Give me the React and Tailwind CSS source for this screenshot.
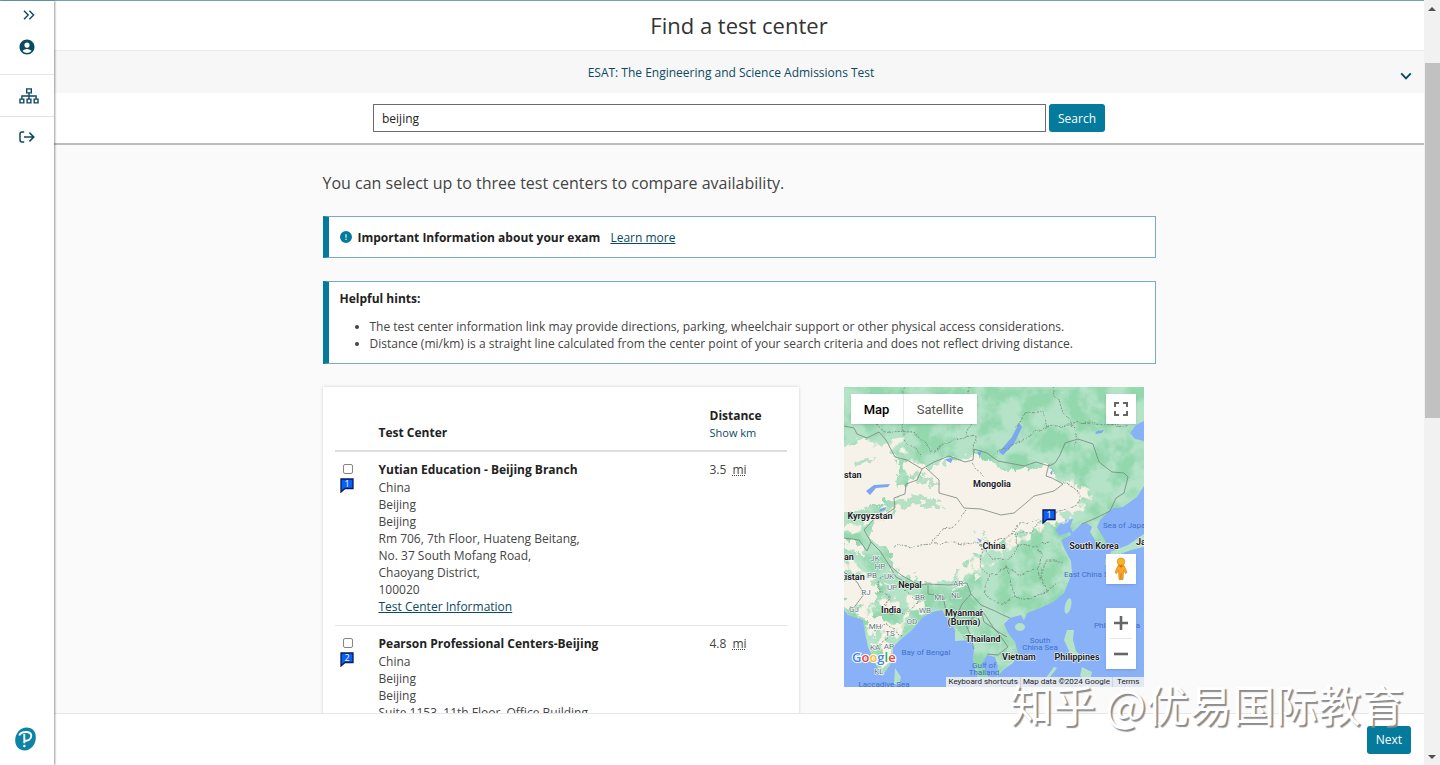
import { FaCircleExclamation } from 'react-icons/fa6'
import { MdAccountCircle } from 'react-icons/md'

const centers = [
  {
    id: 1,
    name: 'Yutian Education - Beijing Branch',
    lines: ['China', 'Beijing', 'Beijing', 'Rm 706, 7th Floor, Huateng Beitang,', 'No. 37 South Mofang Road,', 'Chaoyang District,', '100020'],
    distance: '3.5',
  },
  {
    id: 2,
    name: 'Pearson Professional Centers-Beijing',
    lines: ['China', 'Beijing', 'Beijing', 'Suite 1153, 11th Floor, Office Building'],
    distance: '4.8',
  },
]

const countries = [
  ['stan', 0, 91, 'start'],
  ['Mongolia', 148, 100],
  ['Kyrgyzstan', 26, 132],
  ['China', 150, 162],
  ['South Korea', 250, 162],
  ['Ja', 292, 158, 'start'],
  ['an', 0, 173, 'start'],
  ['kistan', -4, 193, 'start'],
  ['Nepal', 66, 201],
  ['India', 47, 226],
  ['Myanmar', 120, 229],
  ['(Burma)', 120, 238],
  ['Thailand', 139, 255],
  ['Vietnam', 175, 273],
  ['Philippines', 233, 273],
]

const seas = [
  ['Sea of Japa', 259, 141, 'start'],
  ['East China S', 220, 190, 'start'],
  ['Phil', 250, 241, 'start'],
  ['a', 294, 241],
  ['South', 196, 256],
  ['China Sea', 196, 263],
  ['Bay of Bengal', 82, 268],
  ['Gulf of', 140, 281],
  ['Thailand', 140, 288],
  ['Laccadive Sea', 40, 300],
]

const states = [
  ['JK', 31, 174],
  ['HP', 36, 182],
  ['PB', 28, 191],
  ['UK', 45, 192],
  ['UP', 48, 203],
  ['RJ', 22, 208],
  ['AR', 114, 199],
  ['BR', 76, 213],
  ['ML', 96, 213],
  ['NL', 112, 211],
  ['GJ', 10, 225],
  ['WB', 81, 226],
  ['OD', 68, 237],
  ['MH', 31, 242],
  ['TS', 46, 249],
  ['KA', 31, 263],
  ['AP', 45, 262],
  ['KL', 35, 287],
]

function Sidebar() {
  return (
    <nav className="relative z-20 flex w-[54px] shrink-0 flex-col bg-white text-[#0b4a63] shadow-[1px_0_2px_rgba(0,0,0,0.4)]">
      <div className="flex h-[74px] flex-col items-center border-b border-[#e4e4e4]">
        <button aria-label="Expand menu" className="mt-2 ml-1 flex h-3 items-center">
          <svg width="12" height="10" viewBox="0 0 12 10" fill="none" stroke="currentColor" strokeWidth="1.4">
            <path d="M1 .7 5.2 5 1 9.3M6.4 .7 10.6 5 6.4 9.3" />
          </svg>
        </button>
        <button aria-label="My account" className="mt-[17px]">
          <MdAccountCircle className="size-[18px]" />
        </button>
      </div>
      <button aria-label="Programs" className="flex h-[42px] items-center justify-center border-b border-[#e4e4e4] pl-1">
        <svg width="20" height="16" viewBox="0 0 20 16" fill="none" stroke="currentColor" strokeWidth="1.4">
          <path d="M7.7 .9h4.6v4H7.7zM1 11.1h3.8v3.8H1zM8.1 11.1h3.8v3.8H8.1zM15.2 11.1H19v3.8h-3.8zM10 5v6M2.9 11V8h14.2v3" />
        </svg>
      </button>
      <button aria-label="Sign out" className="flex h-10 items-center justify-center">
        <svg width="16" height="12" viewBox="0 0 16 12" fill="none" stroke="currentColor" strokeWidth="1.5">
          <path d="M5.2 .9H3Q1 .9 1 2.9v6.2q0 2 2 2h2.2M5 6h9.6M10.4 1.6 14.8 6l-4.4 4.4" />
        </svg>
      </button>
      <svg className="mt-auto mb-[14px] ml-[14px]" width="23" height="24" viewBox="0 0 23 24" aria-label="Pearson">
        <path d="M12.5 .6c6 0 9.600 4 9.300 10.400-.3 7-5.100 12.400-11.100 12.400C5 23.400 1 19 1.200 13 1.500 6 6.500 .6 12.500 .6Z" fill="#0b84a5" />
        <path d="M5.200 8.500C7 4.200 17.300 3.300 17.300 8.800c0 3.700-3.600 5.300-6 4.800M10.300 7v9.300" fill="none" stroke="#fff" strokeWidth="1.900" />
        <circle cx="10.400" cy="19" r="1.200" fill="#fff" />
      </svg>
    </nav>
  )
}

function Flag({ number }) {
  return (
    <svg width="14" height="15" viewBox="0 0 14 15" aria-hidden="true">
      <path d="M1 1h12v9.500H5L1 14z" fill="#0860fa" stroke="#0a1a55" strokeWidth="1.300" />
      <text x="7" y="9" textAnchor="middle" fill="#fff" className="font-['Open_Sans',sans-serif] text-[9px]">{number}</text>
    </svg>
  )
}

function MapLabels({ labels, className }) {
  return (
    <g className={className}>
      {labels.map(([text, x, y, anchor]) => (
        <text key={text + y} x={x} y={y} textAnchor={anchor || 'middle'}>{text}</text>
      ))}
    </g>
  )
}

function MapDrawing() {
  return (
    <svg viewBox="0 0 300 300" className="block w-full" role="img" aria-label="Map of test centers">
      <defs>
        <filter id="relief" x="0" y="0" width="100%" height="100%" colorInterpolationFilters="sRGB">
          <feTurbulence type="fractalNoise" baseFrequency="0.045" numOctaves="5" seed="7" />
          <feColorMatrix values="0 0 0 0 0.45  0 0 0 0 0.8  0 0 0 0 0.58  0 4 0 0 -1.6" />
          <feComposite in2="SourceGraphic" operator="in" />
        </filter>
        <filter id="sand" x="0" y="0" width="100%" height="100%" colorInterpolationFilters="sRGB">
          <feTurbulence type="fractalNoise" baseFrequency="0.08" numOctaves="4" seed="12" />
          <feColorMatrix values="0 0 0 0 0.97  0 0 0 0 0.945  0 0 0 0 0.9  0 9 0 0 -4.4" />
          <feComposite in2="SourceGraphic" operator="in" />
        </filter>
        <filter id="ragged" x="-5%" y="-5%" width="110%" height="110%" colorInterpolationFilters="sRGB">
          <feTurbulence type="fractalNoise" baseFrequency="0.12" numOctaves="4" seed="3" />
          <feDisplacementMap in="SourceGraphic" scale="16" xChannelSelector="R" yChannelSelector="G" />
        </filter>
        <filter id="wavy" x="-5%" y="-5%" width="110%" height="110%" colorInterpolationFilters="sRGB">
          <feTurbulence type="fractalNoise" baseFrequency="0.08" numOctaves="2" seed="5" />
          <feDisplacementMap in="SourceGraphic" scale="8" xChannelSelector="R" yChannelSelector="G" />
        </filter>
        <path id="mainland" d="M0 0H300V34L292 38 286 46 291 52 300 54V99L293 110 279 120 269 121 263 126 256 133 253 140 257 147 262 155 260 161 253 161 251 153 246 145 248 140 243 136 237 137 229 145 226 140 229 132 220 133 211 143 215 149 226 145 227 148 217 153 221 163 227 174 228 186 224 196 220 206 209 215 196 221 183 226 180 234 177 228 166 231 160 237 164 246 171 255 174 266 169 276 159 283 153 290 154 279 151 270 143 268 138 276 143 287 149 300H137L132 285 129 273 130 262 126 253 111 254 111 243 104 233 98 223 88 225 79 230 68 243 56 253 49 260 49 273 44 281 38 289 31 276 24 260 21 246 19 233 13 231 4 228 0 223Z" />
      </defs>
      <rect width="300" height="300" fill="#89b1f8" />
      <g fill="#b5e3c8">
        <use href="#mainland" />
        <path d="M51 281 57 290 55 298 50 297Z" />
        <ellipse cx="176" cy="240" rx="5" ry="4" />
        <ellipse cx="224" cy="219" rx="3" ry="8" transform="rotate(14 224 219)" />
        <path d="M223 243 230 243 229 253 232 264 240 272 237 275 226 266 220 253ZM238 280 248 285 246 294 236 289ZM213 281 203 294 201 292 210 280ZM262 168 268 166 267 175 261 178ZM266 165 284 158 300 147V160L287 163 271 169Z" />
      </g>
      <use href="#mainland" fill="#b5e3c8" filter="url(#relief)" opacity=".5" />
      <path d="M108 205 124 200 130 220 124 250 112 244 106 228Z" fill="#86cfa4" opacity=".6" filter="url(#ragged)" />
      {/* scattered dry patches: India, the far west, the northern plain */}
      <g fill="#000" filter="url(#sand)">
        <path d="M0 165 30 190 60 205 80 214 82 225 66 240 48 256 46 275 38 282 28 262 22 240 12 228 0 220ZM0 60 60 50 90 90 130 70 130 130 60 130 0 150ZM100 165 160 145 225 90 250 105 245 125 215 140 170 160 130 195 108 204Z" />
      </g>
      {/* dry regions */}
      <g fill="#f7f2e9" filter="url(#ragged)">
        <path d="M-8 63 22 54 43 61 52 72 56 87 52 108 40 116 20 122 -8 126Z" />
        <path d="M86 84 105 72 135 68 160 84 180 82 205 77 214 95 232 99 240 108 230 122 210 127 192 139 176 147 160 153 146 160 136 166 124 172 116 184 106 196 84 195 62 189 47 180 48 165 28 152 28 140 52 126 57 100 66 92Z" />
        <path d="M-6 197 20 190 34 201 30 215 10 220 -6 207ZM-6 150 14 158 22 168 10 166ZM22 230 36 226 40 240 30 250Z" />
      </g>
      {/* greener mountains inside the dry regions */}
      <g fill="#a9dcbd" filter="url(#ragged)" opacity=".8">
        <path d="M-6 127 37 119 53 112 76 108 98 119 96 122 76 117 57 120 30 127 -6 140ZM64 88 78 87 95 98 79 98ZM134 145 148 155 140 152ZM9 74 30 70 26 76 14 79Z" />
      </g>
      <g fill="#7ba7ee">
        <path d="M175 36 178 40 170 57 159 68 155 65 168 50ZM22 104 30 98 46 97 44 100 32 101 26 108ZM36 122 42 120 41 123 35 125ZM101 72 109 71 107 76 103 74ZM133 66 138 63 136 69ZM253 44 260 43 258 46 251 47ZM133 151 138 153 136 156ZM206 86 209 82 208 88Z" />
      </g>
      <g fill="none" stroke="#75877d" strokeWidth=".8">
        <path d="M0 39 10 41 13 47 23 51 35 45 42 53 51 70 63 73 78 82 90 75 105 69 121 75 129 73 130 62 143 66 154 74 170 77 180 79 192 75 205 79 211 76 216 68 221 56 234 52 249 57 255 75 268 85 280 86 284 90 280 106 272 111 266 124 252 131 238 137" />
        <path d="M82 81 95 93 95 106 113 111 120 121 137 122 157 128 170 126 182 116 190 109 210 104 219 97 208 91 202 89 205 77" />
        <path d="M78 82 73 93 62 97 61 107 50 111 51 121 42 127 30 132 20 143 27 155 23 164 15 153 0 151M27 155 36 164 45 178 57 188 75 198 84 197 105 198 123 196 127 207 137 218 151 224 159 228 166 231" />
        <path d="M45 178 52 190 73 201M0 185 13 195 20 207 9 222M84 198 84 207 99 209 102 224M127 207 118 217 113 228M130 262 126 247 122 238 137 222 143 231 151 243 163 250M137 222 140 235 152 243 164 260 154 268 143 267" />
      </g>
      <g fill="none" stroke="#708378" strokeWidth=".8" strokeDasharray="2 1.300" filter="url(#wavy)">
        <path d="M60 0 59 50 79 69M10 23 40 44 70 45 87 65M87 65 112 52 130 48 129 65M125 0 130 30 122 49M210 0 217 25 232 41M154 66 187 48 204 40 199 24 180 27 172 42M204 40 225 37 250 36 285 39M232 46 233 60M220 95 238 107 232 116 211 126" />
        <path d="M49 160 74 158 90 157 92 150 98 142 109 141 122 124M92 157 109 155 138 158 149 173 165 172 174 158 170 146 188 146 195 135 211 125M138 158 136 177 145 189 164 181 174 188 193 183 199 170 190 159 205 154M145 189 140 208 157 218 169 209 186 212 202 203 215 194M164 181 169 209M193 183 202 203M174 158 190 159M220 174 202 174 196 192M39 188 33 203 47 211 39 225 60 229M60 229 74 214 61 203M31 243 43 238 58 249M31 262 45 252M75 210 84 219M128 75 140 90M150 155 165 150 172 138 196 132" />
      </g>
      <MapLabels labels={seas} className="fill-[#3f70c9] font-[Roboto,sans-serif] text-[8px]" />
      <MapLabels labels={states} className="fill-[#62727a] stroke-white font-[Roboto,sans-serif] text-[8px] [paint-order:stroke]" />
      <MapLabels labels={countries} className="fill-[#202124] stroke-white stroke-1 font-[Roboto,sans-serif] text-[9px] font-bold [paint-order:stroke]" />
      <text x="8" y="275" stroke="#fff" strokeWidth="2" className="font-['Open_Sans',sans-serif] text-[13px] font-semibold [paint-order:stroke]">
        <tspan fill="#4285f4">G</tspan>
        <tspan fill="#ea4335">o</tspan>
        <tspan fill="#fbbc04">o</tspan>
        <tspan fill="#4285f4">g</tspan>
        <tspan fill="#34a853">l</tspan>
        <tspan fill="#ea4335">e</tspan>
      </text>
    </svg>
  )
}

function TestCenterMap() {
  return (
    <div className="relative mr-3 w-[300px] shrink-0 self-start overflow-hidden font-[Roboto,sans-serif]">
      <MapDrawing />
      <div className="absolute top-[7px] left-[7px] flex h-[30px] bg-white text-[13px] shadow-sm">
        <button className="w-[53px] border-r border-[#e6e6e6] font-medium text-black">Map</button>
        <button className="w-[73px] text-[#565656]">Satellite</button>
      </div>
      <button aria-label="Toggle fullscreen view" className="absolute top-[7px] right-2 flex size-[30px] items-center justify-center bg-white shadow-sm">
        <svg width="14" height="14" viewBox="0 0 14 14" fill="none" stroke="#666" strokeWidth="2">
          <path d="M1 5V1h4M9 1h4v4M13 9v4H9M5 13H1V9" />
        </svg>
      </button>
      <div className="absolute top-[122px] left-[198px]">
        <Flag number={1} />
      </div>
      <button aria-label="Street View" className="absolute top-[167px] right-2 flex size-[30px] items-center justify-center bg-white shadow-sm">
        <svg width="14" height="24" viewBox="0 0 14 24">
          <path d="M4 8.500h6l3 7-1.500 1-2-3L9 22.500H5L4.500 13.500l-2 3-1.500-1z" fill="#f9a825" stroke="#d98212" strokeWidth=".7" />
          <path d="m4.500 8.500 2.500 2 2.500-2z" fill="#e65100" />
          <path d="M7 16v6" stroke="#c66e0a" strokeWidth=".7" />
          <circle cx="7" cy="4.700" r="3.700" fill="#fbb424" stroke="#d98212" strokeWidth=".7" />
        </svg>
      </button>
      <div className="absolute top-[221px] right-2 flex w-[30px] flex-col items-center bg-white shadow-sm">
        <button aria-label="Zoom in" className="flex h-[30px] items-center">
          <svg width="14" height="14" viewBox="0 0 14 14" stroke="#666" strokeWidth="2.600"><path d="M7 0v14M0 7h14" /></svg>
        </button>
        <div className="h-px w-[22px] bg-[#e6e6e6]" />
        <button aria-label="Zoom out" className="flex h-[30px] items-center">
          <svg width="14" height="14" viewBox="0 0 14 14" stroke="#666" strokeWidth="2.600"><path d="M0 7h14" /></svg>
        </button>
      </div>
      <div className="absolute right-0 bottom-0 flex h-[10px] items-center bg-[#e3e9f3] text-[8px] leading-[10px] whitespace-nowrap text-[#222]">
        <button className="px-[2px]">Keyboard shortcuts</button>
        <span className="border-x border-[#c9d3e3] px-[2px]">Map data ©2024 Google</span>
        <a href="#terms" className="px-1">Terms</a>
      </div>
    </div>
  )
}

function CenterTable() {
  return (
    <div className="flex-1 bg-white px-3 pt-5 shadow-[0_0_3px_rgba(0,0,0,0.18)]">
      <table className="w-full table-fixed text-left">
        <thead>
          <tr className="border-b-2 border-[#dedede] align-bottom">
            <td className="w-11" />
            <th className="pb-[9px] font-bold text-[#222]">Test Center</th>
            <th className="w-[77px] pb-[9px] font-bold text-[#222]">
              Distance
              <button className="block text-[11px] leading-[17px] font-normal text-[#0b4a63]">Show km</button>
            </th>
          </tr>
        </thead>
        <tbody>
          {centers.map((center) => (
            <tr key={center.id} className="border-b border-[#e4e4e4] align-top">
              <td className="pt-3 pl-[5px]">
                <input type="checkbox" aria-label={center.name} className="mx-[3px] block size-[10px] appearance-none rounded-[2px] border border-[#858585]" />
                <div className="mt-1">
                  <Flag number={center.id} />
                </div>
              </td>
              <td className="py-[9px]">
                <div className="leading-[18px] font-bold text-[#222]">{center.name}</div>
                {center.lines.map((line, i) => (
                  <div key={i}>{line}</div>
                ))}
                <a href="#center" className="block leading-[18px] text-[#0b4a63] underline">Test Center Information</a>
              </td>
              <td className="py-[9px] leading-[18px]">
                {center.distance} <abbr title="miles" className="ml-[3px]">mi</abbr>
              </td>
            </tr>
          ))}
        </tbody>
      </table>
    </div>
  )
}

function Scrollbar() {
  return (
    <div className="flex w-4 shrink-0 flex-col items-center bg-[#f1f1f1]">
      <svg className="h-4 w-4" viewBox="0 0 16 16"><path d="M4 11h8L8 7z" fill="#505050" /></svg>
      <div className="flex w-full flex-1 flex-col items-center">
        <div className="basis-[47px]" />
        <div className="h-[355px] w-[15px] bg-[#c1c1c1]" />
      </div>
      <svg className="h-4 w-4" viewBox="0 0 16 16"><path d="M4 6h8l-4 4z" fill="#505050" /></svg>
    </div>
  )
}

export default function App() {
  return (
    <div className="relative flex h-screen overflow-hidden bg-white font-['Open_Sans',sans-serif] text-[12px] leading-[17px] text-[#444]">
      <div className="flex min-w-0 flex-1 border-t border-[#6fa5b8]">
        <Sidebar />
        <div className="flex min-w-0 flex-1 flex-col">
          <header>
            <h1 className="flex h-[50px] items-center justify-center border-b border-[#ececec] text-[22px] text-[#333]">Find a test center</h1>
            <button className="flex h-[42px] w-full items-center bg-[#f7f7f7] pr-3 text-[#0b4a63]">
              <span className="flex-1 pl-2">ESAT: The Engineering and Science Admissions Test</span>
              <svg className="mt-2" width="12" height="8" viewBox="0 0 12 8" fill="none" stroke="currentColor" strokeWidth="1.900">
                <path d="m1.200 1.300 4.800 5 4.800-5" />
              </svg>
            </button>
            <form className="flex h-[52px] items-center justify-center gap-[3px] border-b-2 border-[#bcbcbc] px-4">
              <input aria-label="Address or city" defaultValue="beijing" className="h-[28px] w-full max-w-[673px] border border-[#6b6b6b] bg-white px-2 text-[#222]" />
              <button type="button" className="h-[28px] rounded-[3px] bg-[#047a9c] px-[9px] text-white">Search</button>
            </form>
          </header>

          <main className="min-h-0 flex-1 overflow-hidden bg-[#fafafa]">
            <div className="mx-auto w-full max-w-[833px] pt-[27px]">
              <p className="mb-[22px] text-[16px] leading-[22px]">You can select up to three test centers to compare availability.</p>
              <div className="mb-[23px] flex h-[42px] items-center border border-l-6 border-[#78acbf] border-l-[#047a9c] bg-white px-[11px]">
                <FaCircleExclamation className="mr-[6px] size-3 text-[#047a9c]" />
                <strong className="mr-[10px] font-bold text-[#222]">Important Information about your exam</strong>
                <a href="#learn" className="text-[#0b4a63] underline">Learn more</a>
              </div>
              <div className="mb-[23px] border border-l-6 border-[#78acbf] border-l-[#047a9c] bg-white px-[11px] pt-2 pb-[11px]">
                <strong className="font-bold text-[#222]">Helpful hints:</strong>
                <ul className="mt-[11px] list-disc pl-[30px]">
                  <li>The test center information link may provide directions, parking, wheelchair support or other physical access considerations.</li>
                  <li>Distance (mi/km) is a straight line calculated from the center point of your search criteria and does not reflect driving distance.</li>
                </ul>
              </div>
              <div className="flex gap-[45px]">
                <CenterTable />
                <TestCenterMap />
              </div>
            </div>
          </main>

          <footer className="flex h-[52px] shrink-0 items-center justify-end border-t border-[#e8e8e8] bg-white pr-[13px]">
            <button className="h-[28px] rounded-[3px] bg-[#047a9c] px-[9px] text-white">Next</button>
          </footer>
        </div>
      </div>
      <Scrollbar />
      <div className="pointer-events-none absolute right-9 bottom-[34px] z-30 font-['Noto_Sans_CJK_SC',sans-serif] text-[43px] leading-[56px] whitespace-nowrap text-white [text-shadow:2px_2px_1px_#8c8c8c]">
        知乎 @优易国际教育
      </div>
    </div>
  )
}
